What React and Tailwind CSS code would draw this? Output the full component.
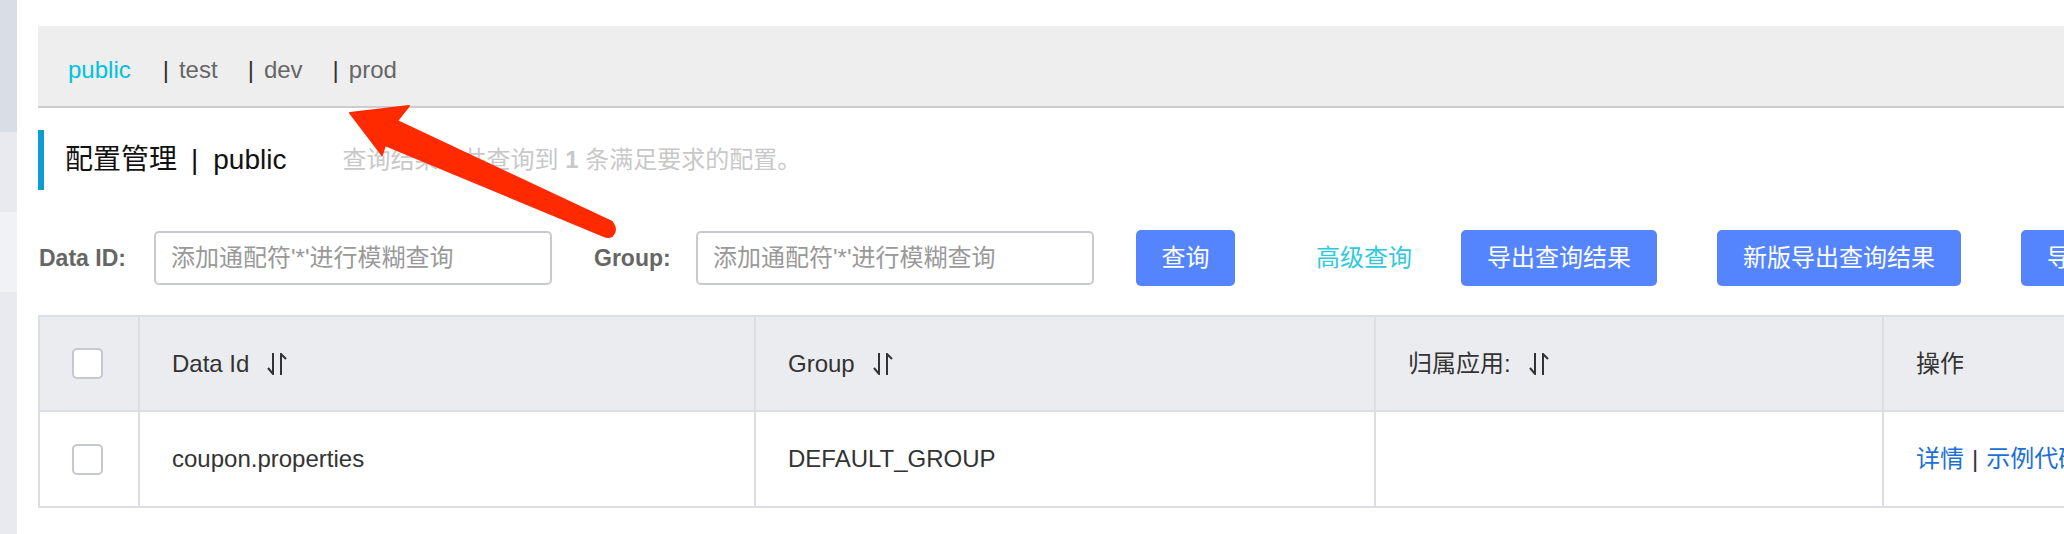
import React from "react";

const SortIcon = () => (
    <svg width="20" height="22" viewBox="0 0 20 22" fill="none" stroke="#333" strokeWidth="2" className="ml-[18px] shrink-0">
        <path d="M6 0v21L1 15" />
        <path d="M14 22V1l5 5" />
    </svg>
);

const tabs = ["test", "dev", "prod"];

const headers = [
    { label: "Data Id", sort: true },
    { label: "Group", sort: true },
    { label: "归属应用:", sort: true },
    { label: "操作", sort: false },
];

const widths = ["w-[100px]", "w-[616px]", "w-[620px]", "w-[508px]", "w-[400px]"];

const Checkbox = () => (
    <div className="w-[31px] h-[31px] ml-[32px] border-2 border-[#c6c8d0] rounded-[5px] bg-white"></div>
);

export default function App() {
    return (
        <div className="relative flex w-[2064px] h-[534px] overflow-hidden bg-white font-['Liberation_Sans','Noto_Sans_CJK_SC',sans-serif]">
            {/* left strip */}
            <div className="flex flex-col w-[17px] shrink-0">
                <div className="h-[132px] bg-[#d9dde5]"></div>
                <div className="h-[80px] bg-[#e8eaef]"></div>
                <div className="h-[80px] bg-[#f1f2f6]"></div>
                <div className="flex-1 bg-[#e8eaef]"></div>
            </div>

            <div className="flex-1 min-w-0 pl-[21px] pt-[26px]">
                {/* namespace tabs */}
                <div className="flex items-center h-[82px] pl-[30px] pt-[8px] bg-[#eeeeee] border-b-2 border-[#cccccc] text-[24px] whitespace-nowrap">
                    <span className="text-[#00c1de]">public</span>
                    {tabs.map((t, i) => (
                        <React.Fragment key={t}>
                            <span className={`${i === 0 ? "ml-[32px]" : "ml-[30px]"} text-[#333]`}>|</span>
                            <span className="ml-[10px] text-[#666]">{t}</span>
                        </React.Fragment>
                    ))}
                </div>

                {/* title */}
                <div className="flex items-center h-[60px] mt-[22px] pl-[21px] border-l-[6px] border-[#0c9bd5] whitespace-nowrap">
                    <span className="text-[28px] text-[#111]">配置管理</span>
                    <span className="text-[28px] text-[#111] ml-[14px]">|</span>
                    <span className="text-[28px] text-[#111] ml-[15px]">public</span>
                    <span className="text-[24px] text-[#c8c8c8] ml-[56px]">
                        查询结果：共查询到 <b>1</b> 条满足要求的配置。
                    </span>
                </div>

                {/* search row */}
                <div className="flex items-center h-[56px] mt-[40px] whitespace-nowrap">
                    <span className="w-[116px] shrink-0 pl-[1px] text-[23px] font-bold text-[#666]">Data ID:</span>
                    <div className="flex items-center w-[398px] h-[54px] shrink-0 px-[15px] border-2 border-[#c8cad2] rounded-[5px] text-[24px] text-[#999]">
                        添加通配符'*'进行模糊查询
                    </div>
                    <span className="w-[102px] ml-[42px] shrink-0 text-[23px] font-bold text-[#666]">Group:</span>
                    <div className="flex items-center w-[398px] h-[54px] shrink-0 px-[15px] border-2 border-[#c8cad2] rounded-[5px] text-[24px] text-[#999]">
                        添加通配符'*'进行模糊查询
                    </div>
                    <button className="flex items-center justify-center w-[99px] h-[56px] ml-[42px] shrink-0 rounded-[5px] bg-[#5584ff] text-[24px] text-white">
                        查询
                    </button>
                    <span className="ml-[81px] shrink-0 text-[24px] text-[#30c9dc]">高级查询</span>
                    <button className="h-[56px] ml-[49px] px-[26px] shrink-0 rounded-[5px] bg-[#5584ff] text-[24px] text-white">
                        导出查询结果
                    </button>
                    <button className="h-[56px] ml-[60px] px-[26px] shrink-0 rounded-[5px] bg-[#5584ff] text-[24px] text-white">
                        新版导出查询结果
                    </button>
                    <button className="h-[56px] ml-[60px] px-[26px] shrink-0 rounded-[5px] bg-[#5584ff] text-[24px] text-white">
                        导入配置
                    </button>
                </div>

                {/* table */}
                <div className="mt-[29px] w-max border-t-2 border-l-2 border-[#dcdee3] text-[24px] text-[#333] whitespace-nowrap">
                    <div className="flex bg-[#ebecf0]">
                        <div className={`${widths[0]} h-[95px] flex items-center border-r-2 border-b-2 border-[#dcdee3]`}>
                            <Checkbox />
                        </div>
                        {headers.map((h, i) => (
                            <div key={h.label} className={`${widths[i + 1]} h-[95px] flex items-center pl-[32px] border-r-2 border-b-2 border-[#dcdee3]`}>
                                <span>{h.label}</span>
                                {h.sort && <SortIcon />}
                            </div>
                        ))}
                    </div>
                    <div className="flex bg-white">
                        <div className={`${widths[0]} h-[96px] flex items-center border-r-2 border-b-2 border-[#dcdee3]`}>
                            <Checkbox />
                        </div>
                        <div className={`${widths[1]} h-[96px] flex items-center pl-[32px] border-r-2 border-b-2 border-[#dcdee3]`}>
                            coupon.properties
                        </div>
                        <div className={`${widths[2]} h-[96px] flex items-center pl-[32px] border-r-2 border-b-2 border-[#dcdee3]`}>
                            DEFAULT_GROUP
                        </div>
                        <div className={`${widths[3]} h-[96px] flex items-center pl-[32px] border-r-2 border-b-2 border-[#dcdee3]`}></div>
                        <div className={`${widths[4]} h-[96px] flex items-center pl-[32px] border-r-2 border-b-2 border-[#dcdee3]`}>
                            <span className="text-[#1d6fd6]">详情</span>
                            <span className="mx-[8px]">|</span>
                            <span className="text-[#1d6fd6]">示例代码</span>
                        </div>
                    </div>
                </div>
            </div>

            {/* red annotation arrow */}
            <svg className="absolute left-0 top-0 pointer-events-none" width="2064" height="534" viewBox="0 0 2064 534">
                <path
                    d="M350 113 L409 106 L397 121 L612 222 Q618 230 612 236 Q608 238 604 236 L385 145 L382 155 Z"
                    fill="#ff2a00"
                    stroke="#ff2a00"
                    strokeWidth="2"
                    strokeLinejoin="round"
                />
            </svg>
        </div>
    );
}
